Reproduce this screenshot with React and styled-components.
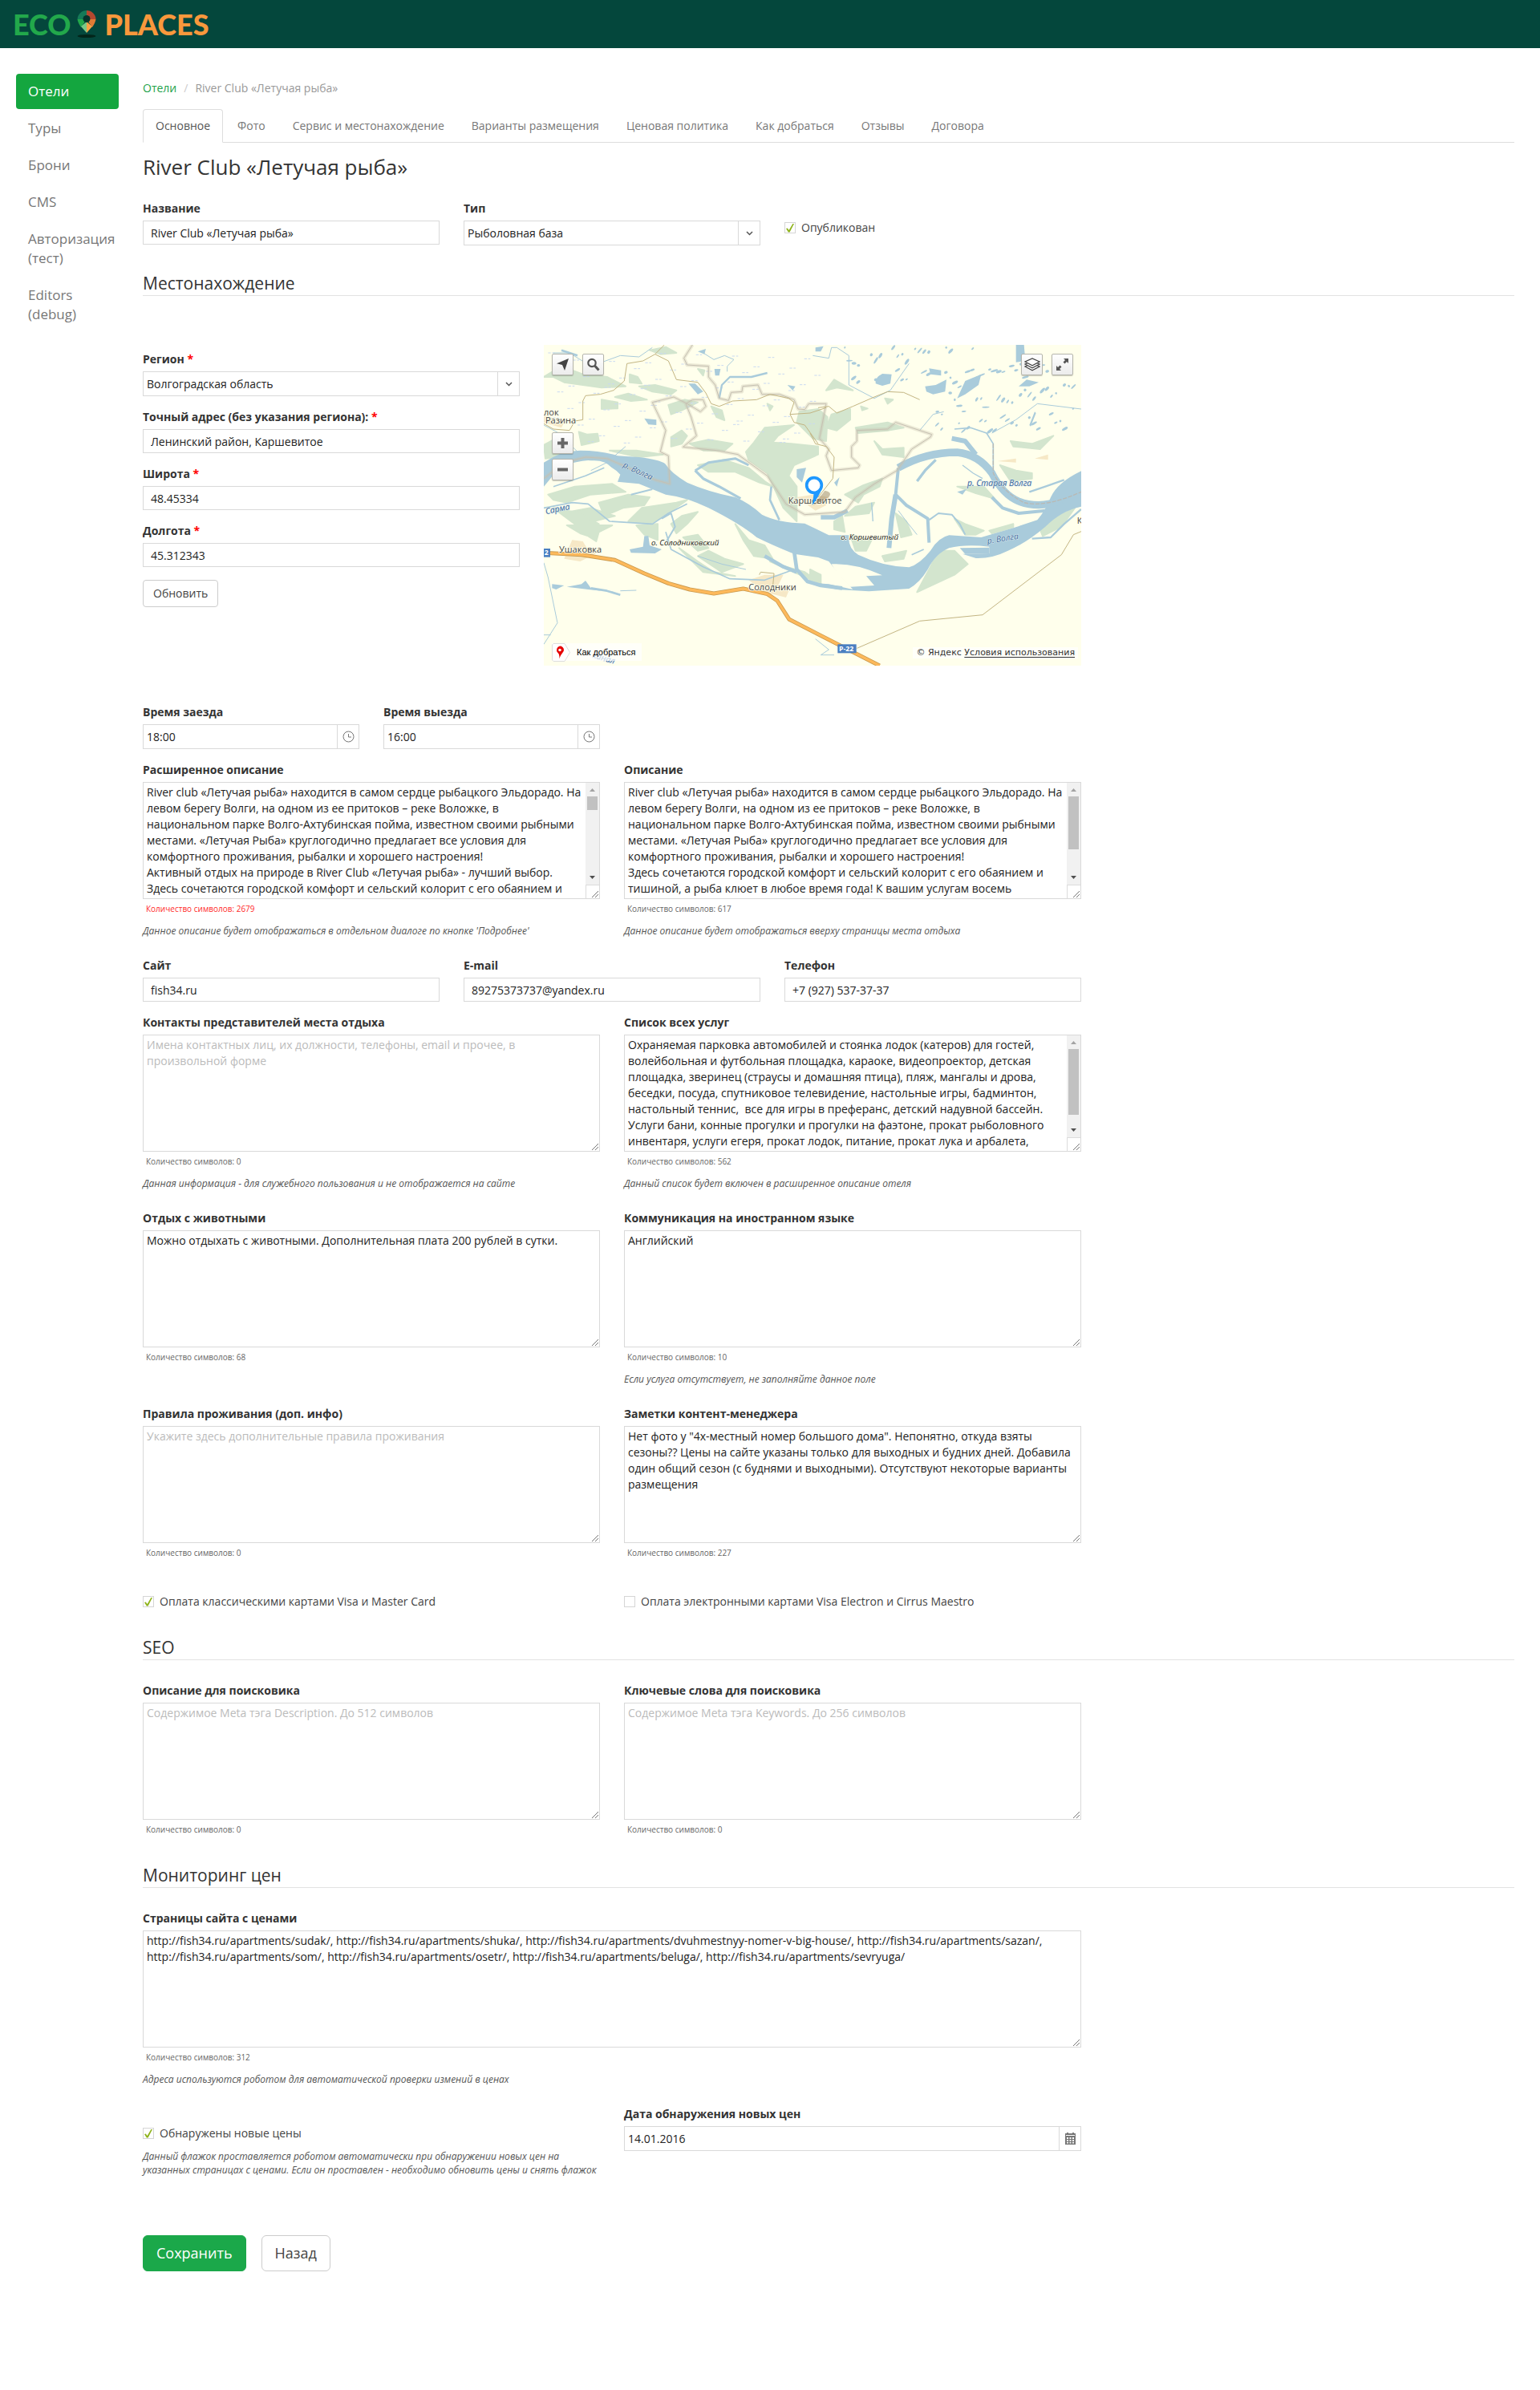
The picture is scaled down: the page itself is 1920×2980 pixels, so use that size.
import React, { useId } from "react";
import styled, { createGlobalStyle, css } from "styled-components";

const GlobalStyle = createGlobalStyle`
  *, *::before, *::after { box-sizing: border-box; }
  body {
    margin: 0;
    background: #fff;
    color: #333;
    font: 14px/20px "Open Sans", "Noto Sans", sans-serif;
  }
  input, select, textarea, button { font: inherit; color: inherit; margin: 0; }
  h1, h2, p, ul, ol { margin: 0; padding: 0; font-weight: 400; }
  ul, ol { list-style: none; }
  a { color: inherit; text-decoration: none; }
`;

/* ---------- shell ---------- */

const Header = styled.header`
  display: flex;
  align-items: center;
  height: 60px;
  padding: 0 16px;
  background: #04473c;
`;
const Logo = styled.a`
  display: flex;
  align-items: center;
  gap: 7px;
  font: 900 36px/40px Lato, sans-serif;
  color: #22a84b;
`;
const LogoAccent = styled.span`
  color: #f9983c;
  padding-left: 2px;
`;
const Layout = styled.div`
  display: flex;
  align-items: flex-start;
  gap: 30px;
  padding: 32px 32px 148px 20px;
`;
const Sidebar = styled.nav`
  flex: 0 0 128px;
  min-width: 0;
`;
const NavList = styled.ul`
  display: flex;
  flex-direction: column;
  gap: 2px;
`;
const NavLink = styled.a`
  display: block;
  padding: 10px 15px;
  border-radius: 4px;
  font-size: 17px;
  line-height: 24px;
  color: ${(p) => (p.$active ? "#fff" : "#777")};
  background: ${(p) => (p.$active ? "#14a63f" : "transparent")};
`;
const Main = styled.main`
  flex: 1;
  min-width: 0;
`;
const Breadcrumb = styled.ol`
  display: flex;
  gap: 9px;
  padding: 8px 0 16px;
  color: #999;
  a { color: #22a24a; }
`;
const Slash = styled.span`
  color: #ccc;
  padding-right: 9px;
`;
const Tabs = styled.ul`
  display: flex;
  gap: 2px;
  border-bottom: 1px solid #ddd;
`;
const Tab = styled.a`
  display: block;
  margin-bottom: -1px;
  padding: 10px 15px;
  border: 1px solid transparent;
  border-radius: 4px 4px 0 0;
  color: #777;
  ${(p) =>
    p.$active &&
    css`
      color: #555;
      background: #fff;
      border-color: #ddd;
      border-bottom-color: #fff;
    `}
`;
const Title = styled.h1`
  padding: 15px 0 27px;
  font-size: 26px;
  line-height: 30px;
`;
const SectionTitle = styled.h2`
  margin: ${(p) => p.$top}px 0 ${(p) => p.$bottom || 28}px;
  border-bottom: 1px solid #e3e3e3;
  font-size: 21px;
  line-height: 30px;
`;

/* ---------- form ---------- */

const Row = styled.div`
  display: grid;
  grid-template-columns: ${(p) => p.$cols};
  column-gap: 30px;
  align-items: start;
  max-width: 1170px;
  margin-top: ${(p) => p.$top || 0}px;
`;
const Stack = styled.div`
  display: flex;
  flex-direction: column;
  align-items: stretch;
  gap: 16px;
`;
const FieldBox = styled.div`
  display: flex;
  flex-direction: column;
  min-width: 0;
`;
const Label = styled.label`
  margin-bottom: 5px;
  font-weight: 700;
`;
const Star = styled.span`
  color: #f00;
`;
const Input = styled.input`
  width: 100%;
  height: 30px;
  padding: 0 9px;
  border: 1px solid #d9d9d9;
  background: #fff;
  color: #222;
  outline: 0;
`;
const Combo = styled.div`
  display: flex;
  height: 31px;
  border: 1px solid #d9d9d9;
  color: #222;
`;
const comboControl = css`
  flex: 1;
  min-width: 0;
  padding: 0 4px;
  border: 0;
  background: transparent;
  outline: 0;
`;
const ComboInput = styled.input`
  ${comboControl}
`;
const ComboSelect = styled.select`
  ${comboControl}
  appearance: none;
`;
const comboEnd = css`
  display: flex;
  flex: 0 0 27px;
  align-items: center;
  justify-content: center;
  padding: 0;
  border: 0;
  border-left: 1px solid #d9d9d9;
  background: #fff;
`;
const ComboButton = styled.button`
  ${comboEnd}
`;
const ComboArrow = styled.span`
  ${comboEnd}
`;
const AreaFrame = styled.div`
  position: relative;
  display: flex;
  height: 146px;
  border: 1px solid #d9d9d9;
`;
const Area = styled.textarea`
  flex: 1;
  min-width: 0;
  padding: 2px ${(p) => (p.$scrolls ? 3 : 4)}px 2px 4px;
  border: 0;
  outline: 0;
  resize: none;
  overflow: hidden;
  background: transparent;
  color: #222;
  &::placeholder { color: #bbb; opacity: 1; }
`;
const Grip = styled.svg`
  position: absolute;
  right: 1px;
  bottom: 1px;
`;
const ScrollBar = styled.div`
  display: flex;
  flex-direction: column;
  flex: 0 0 17px;
  background: #f1f1f1;
`;
const ScrollArrow = styled.svg`
  flex: 0 0 17px;
`;
const ScrollRail = styled.div`
  flex: 1;
  padding: 0 2px;
`;
const ScrollThumb = styled.div`
  height: ${(p) => p.$size}px;
  background: #c1c1c1;
`;
const ScrollCorner = styled.div`
  flex: 0 0 17px;
  border: solid #dcdcdc;
  border-width: 1px 0 0 1px;
  background: #fff;
`;
const Counter = styled.p`
  margin-top: 5px;
  padding-left: 4px;
  font-size: 10px;
  line-height: 14px;
  color: ${(p) => (p.$over ? "#ff2a2a" : "#666")};
`;
const Hint = styled.p`
  margin-top: ${(p) => p.$top || 12}px;
  font-size: 12px;
  line-height: 17px;
  font-style: italic;
  color: #555;
`;
const CheckLabel = styled.label`
  display: flex;
  align-items: center;
  gap: 7px;
  margin-top: ${(p) => p.$top || 0}px;
  color: #444;
`;
const CheckInput = styled.input`
  appearance: none;
  width: 14px;
  height: 14px;
  border: 1px solid #d5d5d5;
  background: #fff;
  display: grid;
  place-items: center;
  &:checked::before {
    content: "";
    width: 10px;
    height: 11px;
    background: #8fb31d;
    clip-path: polygon(0 60%, 18% 54%, 36% 78%, 86% 0, 100% 4%, 46% 100%, 28% 100%);
  }
`;
const Button = styled.button`
  align-self: flex-start;
  padding: ${(p) => (p.$large ? "10px 16px" : "6px 12px")};
  border: 1px solid ${(p) => (p.$primary ? "#1ba84a" : "#ccc")};
  border-radius: ${(p) => (p.$large ? 6 : 4)}px;
  background: ${(p) => (p.$primary ? "#1ba84a" : "#fff")};
  color: ${(p) => (p.$primary ? "#fff" : "#444")};
  font-size: ${(p) => (p.$large ? 18 : 14)}px;
  line-height: ${(p) => (p.$large ? 23 : 20)}px;
`;
const Actions = styled.div`
  display: flex;
  gap: 19px;
  margin-top: 73px;
`;

/* ---------- map ---------- */

const MapBox = styled.section`
  position: relative;
  height: 400px;
  overflow: hidden;
  background: #ffffec;
  margin-top: -8px;
`;
const MapDrawing = styled.svg`
  display: block;
  width: 100%;
  height: 100%;
  text { font-family: "Open Sans", "Noto Sans", sans-serif; }
`;
const MapGroup = styled.div`
  position: absolute;
  display: flex;
  flex-direction: ${(p) => (p.$column ? "column" : "row")};
  gap: ${(p) => (p.$column ? 6 : 11)}px;
  top: ${(p) => p.$top}px;
  ${(p) => p.$side}: 10px;
`;
const MapButton = styled.button`
  display: flex;
  align-items: center;
  justify-content: center;
  width: 27px;
  height: 27px;
  padding: 0;
  border: 1px solid #b5b5ac;
  border-radius: 2px;
  background: linear-gradient(#fff, #ececec);
  box-shadow: 0 1px 1px rgba(0, 0, 0, 0.2);
`;
const RouteLink = styled.a`
  position: absolute;
  left: 10px;
  bottom: 6px;
  display: flex;
  align-items: center;
  gap: 8px;
  height: 22px;
  padding-right: 8px;
  background: rgba(255, 255, 255, 0.7);
  font: 11px/22px "Liberation Sans", Arial, sans-serif;
  color: #000;
`;
const Copyright = styled.p`
  position: absolute;
  right: 4px;
  bottom: 9px;
  padding: 0 4px;
  background: rgba(255, 255, 255, 0.7);
  font: 11px/14px "DejaVu Sans", sans-serif;
  a { text-decoration: underline; text-underline-offset: 2px; }
`;

const woods = [
  "24,150 90,110 170,140 260,150 330,185 240,190 170,180 100,170 60,150",
  "240,235 300,245 300,268 240,270", "345,140 375,150 390,175 345,170",
  "380,185 440,180 520,200 500,215 430,205", "420,50 480,38 520,60 460,65",
  "290,225 340,212 410,235 350,240", "155,355 185,365 225,362 230,390 195,398 165,405",
  "490,255 550,235 600,245 540,275 500,290", "650,260 690,275 700,312 670,300",
  "500,375 540,350 560,370 540,400 500,410", "570,400 640,385 730,400 700,425 620,425",
  "24,405 70,380 130,405 70,450 30,455", "270,425 370,425 470,440 380,450",
  "600,480 700,460 790,490 850,540 880,560 830,545 740,505 640,505",
  "780,430 810,395 850,340 960,330 900,370 880,395 950,400 1050,410 1050,440 960,480 940,520 970,560 970,690 920,640 860,510 790,460",
  "980,280 1050,270 1085,300 1080,390 1030,380 970,320",
  "40,590 140,560 280,550 330,580 200,590 110,620 60,610",
  "230,620 340,590 420,600 400,630 320,640 250,670",
  "90,660 200,640 290,670 210,690 140,680",
  "60,640 160,660 230,700 140,700", "110,705 280,705 230,730 220,765 190,745 160,735",
  "390,640 520,620 560,610 490,660 420,700 340,690",
  "370,705 450,700 450,760 400,740", "500,700 540,670 600,655 560,700 520,735",
  "545,750 600,740 640,790 600,800", "640,800 700,830 770,850 690,880 600,820",
  "530,790 600,840 660,880 740,895 620,880", "740,700 790,760 850,780 880,830 810,820 770,760",
  "870,840 930,860 1000,880 1070,930 960,880", "1100,290 1170,270 1170,310 1120,350 1080,340",
  "1190,340 1310,320 1370,340 1310,350 1200,360", "1260,390 1290,420 1370,415 1370,450 1290,440",
  "1150,590 1220,555 1290,530 1280,560 1220,590 1200,620", "1260,620 1240,660 1150,670 1190,635",
  "1340,660 1380,690 1400,740 1360,750", "1170,740 1250,760 1230,800 1190,800",
  "1290,820 1380,800 1370,830 1300,840", "1110,690 1140,670 1150,730 1110,720",
  "1730,480 1790,500 1850,510 1850,530 1770,540", "1570,560 1670,560 1710,605 1640,585",
  "1560,680 1600,700 1670,725 1640,740 1600,740", "1690,725 1780,700 1780,712 1700,735",
  "1880,720 1930,680 2010,640 1960,710 1890,745",
  "1500,800 1560,800 1610,850 1560,890 1420,955 1470,860",
  "1770,390 1850,400 1930,370 1880,420 1780,410", "1020,870 1060,890 1060,930 1020,910",
  "1300,230 1330,235 1310,250", "1080,200 1110,160 1180,200 1120,190",
  "600,120 625,125 620,145", "860,250 880,260 870,275", "1210,260 1235,268 1215,275",
];
const towns = [
  "100,830 130,760 170,765 185,790 240,800 160,840", "790,910 850,890 920,890 900,930 940,950 930,975 850,955",
  "970,600 1030,590 1090,600 1080,630 1040,650", "1720,465 1790,455 1790,470", "1860,455 1910,440 1910,460",
  "24,290 100,320 90,340 24,320",
];
const creeks = [
  [9, "590,500 640,470 740,455 790,480"], [10, "590,500 620,530 680,560 760,605"],
  [12, "1350,490 1340,590 1380,630 1460,680 1465,770"], [18, "1340,590 1325,680 1315,790"],
  [6, "1465,685 1500,660 1550,665 1580,700 1600,740"], [8, "875,560 870,610 905,685"],
  [7, "680,230 690,180 720,150 800,150 860,135"], [6, "465,680 500,660 515,710 480,770"],
  [5, "24,640 130,620 190,625 270,690 430,700 490,660 560,625"],
  [10, "1490,460 1450,500 1420,540"], [14, "960,800 970,870 1010,915 1060,930 1140,940"],
  [14, "850,820 920,860 970,880"], [5, "480,730 500,795 620,860 720,905 850,910 960,870"],
  [5, "1560,345 1620,340 1680,360 1705,400 1705,510"], [18, "1550,380 1600,390 1640,440"],
  [12, "1700,600 1740,640 1800,660 1900,650"], [7, "1850,755 1920,750 1970,700 2034,645"],
  [7, "1840,580 1900,560 1970,535"], [16, "1060,675 1110,675 1160,650"],
  [3, "1030,70 1090,80 1100,40 1120,40 1165,70 1165,180 1260,230 1320,200 1390,100"],
  [3, "24,845 40,900 75,1070 24,1150"], [3, "24,1115 50,1115"], [3, "24,330 80,360 150,430"],
  [3, "60,60 120,60 200,110 310,70 380,75 430,40"], [8, "90,50 150,70"],
  [3, "1430,350 1480,290 1520,280"], [3, "1700,360 1790,310 1870,250 2034,270"],
  [3, "620,60 660,85 700,70 735,85 710,110 710,130"], [3, "1040,1130 1090,1170 1060,1190 1110,1190"],
  [8, "200,940 260,950 310,965"], [3, "310,950 370,948"], [3, "330,410 260,470 200,500"],
  [5, "60,560 180,520 250,490"], [6, "350,590 430,570"],
  [4, "1250,620 1255,690"], [3, "1350,650 1380,690 1420,740"], [4, "1590,480 1630,510 1665,530"],
  [3, "600,820 690,850 780,870"], [5, "1400,815 1445,795"],
];
const lakes = [
  "1265,160 1290,138 1325,140 1320,175 1290,183 1265,175", "1450,185 1490,180 1530,160 1525,205 1480,215 1455,205",
  "1465,118 1510,125 1510,145 1470,140", "1570,230 1600,165 1660,140 1650,180 1600,215", "1800,185 1830,160 1875,170 1840,185",
  "1790,30 1820,30 1825,90 1790,95", "565,175 590,175 620,205 600,215", "400,305 445,310 445,330 415,328",
  "345,795 395,785 400,745 415,745 420,780 465,795 440,810 350,808", "55,925 100,930 70,945 55,940",
  "110,935 165,925 180,912 200,940 240,950 190,945", "970,495 1005,490 990,545 970,525",
  "600,55 630,45 625,65", "662,120 685,120 680,145 665,145", "935,180 965,185 955,200",
  "1040,40 1070,35 1060,55 1040,55", "1580,790 1690,788 1690,810 1600,812", "1570,580 1605,570 1590,590",
  "1110,545 1130,525 1120,560", "1840,330 1860,280 1865,285 1845,335",
];
const roads = [
  "475,30 440,65 395,90 335,100 325,165 285,200 235,215 180,220 170,240 170,310 140,315 120,350 60,345 24,325",
  "440,65 490,90 520,160 600,170 630,210 650,250 680,260 730,240 820,235 870,215 940,230 960,245 945,290 960,320 1000,330 1050,400",
  "1050,265 1090,260 1120,285 1180,260 1260,225 1310,205 1370,208 1430,235",
  "945,290 1020,285 1080,265", "1020,360 1040,400 1080,410 1110,450 1105,530 1050,600",
  "1195,1165 1430,1063 1665,1040 1960,815 2005,740 2034,728", "830,890 835,880 885,885 880,940",
];
const borders = [
  "580,30 548,80 560,105 640,110 640,150 665,180 680,230 715,238 725,208 765,205 768,185 825,180 840,215 905,215 960,235 975,270 1000,272 1015,250 1080,250 1055,380 1090,420 1080,445 1100,500 1200,490 1205,480 1175,450 1175,410 1195,390 1195,350 1310,345 1340,320 1475,365 1470,375 1400,420 1345,500 1260,550 1190,600 1150,655 1000,665 930,625 860,520 750,440 670,425 545,412 595,370 575,300 555,250 580,235 620,235 630,260 610,280 560,250 510,225 430,245 480,350 460,430 490,445 495,550 440,535 340,490 260,455 180,450 100,470 24,530",
];
// Small ponds of the flood plain in the north-east corner.
const ponds = Array.from({ length: 120 }, (_, i) => ({
  x: 1150 + ((i * 197) % 870),
  y: 40 + ((i * 83 + ((i * i) % 37)) % 320),
  r: 4 + ((i * 7) % 11),
  a: -60 + ((i * 29) % 60),
})).filter((p) => p.x > 1480 || p.y < 170);
const marsh = Array.from({ length: 90 }, (_, i) => ({
  x: 40 + ((i * 173) % 1000),
  y: 60 + ((i * 67) % 340),
}));

function MapPicture() {
  return (
    <MapDrawing viewBox="24 30 2010 1200" preserveAspectRatio="xMidYMid slice" role="img" aria-label="Карта">
      <g fill="#d3e5ce" stroke="#d3e5ce" strokeWidth="6" strokeLinejoin="round">
        {woods.map((p) => <polygon key={p} points={p} />)}
      </g>
      <g fill="#f6e8c6">{towns.map((p) => <polygon key={p} points={p} />)}</g>
      <g stroke="#c9d9f2" strokeWidth="3">
        {marsh.map((m, i) => <path key={i} d={`M${m.x} ${m.y}h10m5 0h8`} />)}
      </g>
      <g fill="#a9cbdb">
        <path d="M24 470Q90 425 160 425Q240 425 300 445L380 450Q460 460 478 475Q500 510 560 545Q640 580 740 600Q790 620 840 665Q900 695 1000 698L1090 742L1165 742Q1160 790 1200 815Q1290 858 1390 862Q1430 850 1470 800Q1500 750 1540 742L1660 750L1780 715L1870 685Q1900 650 1920 600Q1945 545 2034 502V635Q1960 650 1900 710Q1830 770 1760 800Q1700 830 1640 828L1590 812L1690 810V785Q1600 775 1540 790Q1490 810 1460 870Q1430 920 1390 942L1240 952L1120 945L1020 920L1090 925L1180 945L1130 890L1090 840L1050 825L960 812Q880 780 820 750Q760 700 640 640Q560 600 480 590L380 550L300 542L310 515Q270 470 190 462Q100 470 70 505L24 560Z" />
        {lakes.map((p) => <polygon key={p} points={p} />)}
        {ponds.map((p, i) => (
          <ellipse key={i} cx={p.x} cy={p.y} rx={p.r} ry={3 + (i % 3)} transform={`rotate(${p.a} ${p.x} ${p.y})`} />
        ))}
      </g>
      <g fill="#ffffec">
        <path d="M1100 850Q1190 845 1290 892L1230 895L1260 930L1170 935Q1120 890 1100 850Z" />
        <path d="M185 465Q250 455 278 490L240 495Q200 480 185 465Z" />
        <path d="M1725 565Q1750 600 1810 620L1800 640Q1750 630 1715 590Z" />
      </g>
      <path d="M1350 490Q1450 432 1570 432Q1650 440 1700 510Q1740 590 1800 615Q1880 645 1960 610" fill="none" stroke="#a9cbdb" strokeWidth="28" />
      <g fill="none" stroke="#a9cbdb" strokeLinejoin="round">
        {creeks.map(([w, p]) => <polyline key={p} points={p} strokeWidth={w} />)}
      </g>
      <g fill="none" strokeLinejoin="round">
        {borders.map((p) => (
          <g key={p}>
            <polyline points={p} stroke="#c9c3b0" strokeOpacity="0.35" strokeWidth="13" />
            <polyline points={p} stroke="#c6c0b2" strokeWidth="3" />
          </g>
        ))}
        <path d="M1705 400V510Q1740 580 1820 620Q1900 640 2034 580" stroke="#b9b9b4" strokeWidth="4" strokeDasharray="16 5" />
        {roads.map((p) => <polyline key={p} points={p} stroke="#c3b583" strokeWidth="3" />)}
        {[[15, "#c99a4f"], [10, "#fdb95b"]].map(([w, c]) => (
          <polyline key={w} stroke={c} strokeWidth={w} points="24,808 165,815 290,835 400,885 490,922 570,945 660,960 770,942 860,962 897,987 942,1057 1280,1230" />
        ))}
      </g>
      <g fill="#4a7fc1">
        <rect x="24" y="792" width="24" height="32" />
        <rect x="1123" y="1150" width="70" height="33" />
      </g>
      <g fill="#fff" fontSize="26" fontWeight="700">
        <text x="26" y="817">2</text>
        <text x="1128" y="1176">Р-22</text>
      </g>
      <g fill="#444" fontSize="33" stroke="#ffffec" strokeWidth="5" paintOrder="stroke">
        <text x="24" y="294">лок</text>
        <text x="30" y="324">Разина</text>
        <text x="81" y="807">Ушаковка</text>
        <text x="790" y="948">Солодники</text>
        <text x="938" y="623">Каршевитое</text>
        <text x="2018" y="700">К</text>
      </g>
      <g fill="#111" fontSize="29" fontStyle="italic" stroke="#ffffec" strokeWidth="4" paintOrder="stroke">
        <text x="426" y="779">о. Солодниковский</text>
        <text x="1135" y="760">о. Коршевитый</text>
      </g>
      <g fill="#40699c" fontSize="31" fontStyle="italic" stroke="#dcebf0" strokeWidth="3" paintOrder="stroke">
        <text transform="translate(318 486) rotate(25)">р. Волга</text>
        <text transform="translate(32 664) rotate(-12)">Сарма</text>
        <text x="1608" y="557">р. Старая Волга</text>
        <text transform="translate(1684 774) rotate(-9)">р. Волга</text>
        <text transform="translate(205 1200) rotate(16)">канал</text>
      </g>
      <path d="M1032 630L1075 575Q1105 580 1090 600Z" fill="#8c7650" fillOpacity="0.45" />
      <circle cx="1035" cy="555" r="28" fill="#fff" stroke="#1e98ff" strokeWidth="11" />
      <path d="M1028 630L1034 585L1060 578Q1050 600 1028 630Z" fill="#1e98ff" />
    </MapDrawing>
  );
}

function HotelMap() {
  return (
    <MapBox>
      <MapPicture />
      <MapGroup $side="left" $top={11}>
        <MapButton type="button" aria-label="Моё местоположение">
          <svg width="17" height="17" viewBox="0 0 17 17"><path d="M16 1L1 7.200L8 9L11 16Z" fill="#444" /></svg>
        </MapButton>
        <MapButton type="button" aria-label="Поиск">
          <svg width="17" height="17" viewBox="0 0 17 17" fill="none" stroke="#555">
            <circle cx="7" cy="6.500" r="4.700" strokeWidth="2.200" /><path d="M10.500 10L15.500 15.500" strokeWidth="3" />
          </svg>
        </MapButton>
      </MapGroup>
      <MapGroup $side="left" $top={109} $column>
        <MapButton type="button" aria-label="Приблизить">
          <svg width="15" height="15" viewBox="0 0 15 15"><path d="M5.500 1h4v4.500H14v4H9.500V14h-4V9.500H1v-4h4.500z" fill="#666" /></svg>
        </MapButton>
        <MapButton type="button" aria-label="Отдалить">
          <svg width="15" height="15" viewBox="0 0 15 15"><path d="M1 5.500h13v4H1z" fill="#666" /></svg>
        </MapButton>
      </MapGroup>
      <MapGroup $side="right" $top={11}>
        <MapButton type="button" aria-label="Слои">
          <svg width="20" height="17" viewBox="0 0 20 17" fill="#fff" stroke="#444" strokeWidth="1.300">
            <path d="M1 11L10 15.800L19 11L10 7Z" /><path d="M1 8L10 12.800L19 8L10 4Z" /><path d="M1 5L10 9.800L19 5L10 1Z" />
          </svg>
        </MapButton>
        <MapButton type="button" aria-label="На весь экран">
          <svg width="15" height="15" viewBox="0 0 15 15" fill="#555">
            <path d="M15 0H9l2 2-2.500 2.500 2 2L13 4l2 2zM0 15h6l-2-2 2.500-2.500-2-2L2 11 0 9z" />
          </svg>
        </MapButton>
      </MapGroup>
      <RouteLink href="#route">
        <svg width="23" height="23" viewBox="0 0 23 23">
          <path d="M2 .5h14l6.500 11L16 22.500H2L.5 21V2z" fill="#fff" stroke="#ddd" />
          <path d="M10 3.500a5 5 0 0 1 5 5c0 3-4 4.500-5.500 11C9.500 15 9 13 7.500 12A5 5 0 0 1 10 3.500z" fill="#e60000" />
          <circle cx="10" cy="8.500" r="1.800" fill="#fff" />
        </svg>
        Как добраться
      </RouteLink>
      <Copyright>© Яндекс <a href="#terms">Условия использования</a></Copyright>
    </MapBox>
  );
}

/* ---------- field parts ---------- */

const ChevronIcon = () => (
  <svg width="9" height="6" viewBox="0 0 9 6" fill="none" stroke="#555" strokeWidth="1.500"><path d="M1 1l3.500 3.500L8 1" /></svg>
);
const ClockIcon = () => (
  <svg width="15" height="15" viewBox="0 0 15 15" fill="none" stroke="#777">
    <circle cx="7.500" cy="7.500" r="6.500" /><path d="M7.500 4v4H11" />
  </svg>
);
const CalendarIcon = () => (
  <svg width="13" height="15" viewBox="0 0 13 15">
    <path d="M0 1h2V0h2v1h5V0h2v1h2v14H0z" fill="#777" />
    <path d="M1 3h11v1H1zM2 6h2v2H2zM5.500 6h2v2h-2zM9 6h2v2H9zM2 9h2v2H2zM5.500 9h2v2h-2zM9 9h2v2H9zM2 12h2v1.500H2zM5.500 12h2v1.500h-2zM9 12h2v1.500H9z" fill="#fff" />
  </svg>
);

function Caption({ id, children, required }) {
  return <Label htmlFor={id}>{children}{required && <Star> *</Star>}</Label>;
}
function TextField({ label, value, required }) {
  const id = useId();
  return (
    <FieldBox>
      <Caption id={id} required={required}>{label}</Caption>
      <Input id={id} type="text" defaultValue={value} />
    </FieldBox>
  );
}
function SelectField({ label, value, required }) {
  const id = useId();
  return (
    <FieldBox>
      <Caption id={id} required={required}>{label}</Caption>
      <Combo>
        <ComboSelect id={id} defaultValue={value}><option>{value}</option></ComboSelect>
        <ComboArrow aria-hidden="true"><ChevronIcon /></ComboArrow>
      </Combo>
    </FieldBox>
  );
}
function PickerField({ label, value, icon, action }) {
  const id = useId();
  return (
    <FieldBox>
      <Caption id={id}>{label}</Caption>
      <Combo>
        <ComboInput id={id} type="text" defaultValue={value} />
        <ComboButton type="button" aria-label={action}>{icon}</ComboButton>
      </Combo>
    </FieldBox>
  );
}
function AreaField({ label, value, placeholder, count, over, hint, thumb }) {
  const id = useId();
  return (
    <FieldBox>
      <Caption id={id}>{label}</Caption>
      <AreaFrame>
        <Area id={id} defaultValue={value} placeholder={placeholder} $scrolls={Boolean(thumb)} />
        {thumb && (
          <ScrollBar aria-hidden="true">
            <ScrollArrow width="17" height="17"><path d="M5 11h7l-3.500-4z" fill="#a3a3a3" /></ScrollArrow>
            <ScrollRail><ScrollThumb $size={thumb} /></ScrollRail>
            <ScrollArrow width="17" height="17"><path d="M5 6h7l-3.500 4z" fill="#505050" /></ScrollArrow>
            <ScrollCorner />
          </ScrollBar>
        )}
        <Grip width="8" height="8" aria-hidden="true" stroke="#777"><path d="M0 8L8 0M4 8L8 4" /></Grip>
      </AreaFrame>
      <Counter $over={over}>Количество символов: {count}</Counter>
      {hint && <Hint>{hint}</Hint>}
    </FieldBox>
  );
}
function Check({ label, checked, top }) {
  return (
    <CheckLabel $top={top}>
      <CheckInput type="checkbox" defaultChecked={checked} />
      {label}
    </CheckLabel>
  );
}

/* ---------- content ---------- */

const nav = ["Отели", "Туры", "Брони", "CMS", "Авторизация (тест)", "Editors (debug)"];
const tabs = ["Основное", "Фото", "Сервис и местонахождение", "Варианты размещения", "Ценовая политика", "Как добраться", "Отзывы", "Договора"];

const intro =
  "River club «Летучая рыба» находится в самом сердце рыбацкого Эльдорадо. На левом берегу Волги, на одном из ее притоков – реке Воложке, в национальном парке Волго-Ахтубинская пойма, известном своими рыбными местами. «Летучая Рыба» круглогодично предлагает все условия для комфортного проживания, рыбалки и хорошего настроения!\n";
const longText = intro +
  "Активный отдых на природе в River Club «Летучая рыба» - лучший выбор. Здесь сочетаются городской комфорт и сельский колорит с его обаянием и";
const shortText = intro +
  "Здесь сочетаются городской комфорт и сельский колорит с его обаянием и тишиной, а рыба клюет в любое время года! К вашим услугам восемь";
const services =
  "Охраняемая парковка автомобилей и стоянка лодок (катеров) для гостей, волейбольная и футбольная площадка, караоке, видеопроектор, детская площадка, зверинец (страусы и домашняя птица), пляж, мангалы и дрова, беседки, посуда, спутниковое телевидение, настольные игры, бадминтон, настольный теннис,  все для игры в преферанс, детский надувной бассейн. Услуги бани, конные прогулки и прогулки на фаэтоне, прокат рыболовного инвентаря, услуги егеря, прокат лодок, питание, прокат лука и арбалета,";
const notes =
  "Нет фото у \"4х-местный номер большого дома\". Непонятно, откуда взяты сезоны?? Цены на сайте указаны только для выходных и будних дней. Добавила один общий сезон (с буднями и выходными). Отсутствуют некоторые варианты размещения";
const pages =
  "http://fish34.ru/apartments/sudak/, http://fish34.ru/apartments/shuka/, http://fish34.ru/apartments/dvuhmestnyy-nomer-v-big-house/, http://fish34.ru/apartments/sazan/, http://fish34.ru/apartments/som/, http://fish34.ru/apartments/osetr/, http://fish34.ru/apartments/beluga/, http://fish34.ru/apartments/sevryuga/";

const HALVES = "1fr 1fr";
const THIRDS = "1fr 1fr 1fr";

export default function App() {
  return (
    <>
      <GlobalStyle />
      <Header>
        <Logo href="#home">
          ECO
          <svg width="26" height="36" viewBox="0 0 26 36" aria-hidden="true">
            <ellipse cx="13" cy="33" rx="11.500" ry="2" fill="#03251a" />
            <path d="M13 1A11.500 11.500 0 0 0 1.500 12H13z" fill="#157a58" />
            <path d="M13 1A11.500 11.500 0 0 1 24.500 12H13z" fill="#b4482f" />
            <path d="M1.500 12Q2 16 6 22L13 12z" fill="#23a84b" />
            <path d="M24.500 12Q24 16 20 22L13 12z" fill="#e07b35" />
            <path d="M6 21L13 29V15z" fill="#79c987" />
            <path d="M20 21L13 29V15z" fill="#f9a045" />
            <circle cx="13" cy="11.500" r="4.500" fill="#04352c" />
          </svg>
          <LogoAccent>PLACES</LogoAccent>
        </Logo>
      </Header>
      <Layout>
        <Sidebar>
          <NavList>
            {nav.map((item, i) => (
              <li key={item}><NavLink href="#nav" $active={i === 0}>{item}</NavLink></li>
            ))}
          </NavList>
        </Sidebar>
        <Main>
          <Breadcrumb>
            <li><a href="#hotels">Отели</a></li>
            <li><Slash>/</Slash>River Club «Летучая рыба»</li>
          </Breadcrumb>
          <Tabs>
            {tabs.map((item, i) => (
              <li key={item}><Tab href="#tab" $active={i === 0}>{item}</Tab></li>
            ))}
          </Tabs>
          <form onSubmit={(e) => e.preventDefault()}>
            <Title>River Club «Летучая рыба»</Title>
            <Row $cols={THIRDS}>
              <TextField label="Название" value="River Club «Летучая рыба»" />
              <SelectField label="Тип" value="Рыболовная база" />
              <Check label="Опубликован" checked top={24} />
            </Row>

            <SectionTitle $top={32} $bottom={69}>Местонахождение</SectionTitle>
            <Row $cols="470fr 670fr">
              <Stack>
                <SelectField label="Регион" value="Волгоградская область" required />
                <TextField label="Точный адрес (без указания региона):" value="Ленинский район, Каршевитое" required />
                <TextField label="Широта" value="48.45334" required />
                <TextField label="Долгота" value="45.312343" required />
                <Button type="button">Обновить</Button>
              </Stack>
              <HotelMap />
            </Row>

            <Row $cols="270fr 270fr 570fr" $top={48}>
              <PickerField label="Время заезда" value="18:00" icon={<ClockIcon />} action="Выбрать время" />
              <PickerField label="Время выезда" value="16:00" icon={<ClockIcon />} action="Выбрать время" />
            </Row>
            <Row $cols={HALVES} $top={16}>
              <AreaField label="Расширенное описание" value={longText} count={2679} over thumb={17} hint="Данное описание будет отображаться в отдельном диалоге по кнопке 'Подробнее'" />
              <AreaField label="Описание" value={shortText} count={617} thumb={66} hint="Данное описание будет отображаться вверху страницы места отдыха" />
            </Row>
            <Row $cols={THIRDS} $top={25}>
              <TextField label="Сайт" value="fish34.ru" />
              <TextField label="E-mail" value="89275373737@yandex.ru" />
              <TextField label="Телефон" value="+7 (927) 537-37-37" />
            </Row>
            <Row $cols={HALVES} $top={16}>
              <AreaField label="Контакты представителей места отдыха" placeholder="Имена контактных лиц, их должности, телефоны, email и прочее, в произвольной форме" count={0} hint="Данная информация - для служебного пользования и не отображается на сайте" />
              <AreaField label="Список всех услуг" value={services} count={562} thumb={82} hint="Данный список будет включен в расширенное описание отеля" />
            </Row>
            <Row $cols={HALVES} $top={25}>
              <AreaField label="Отдых с животными" value="Можно отдыхать с животными. Дополнительная плата 200 рублей в сутки." count={68} />
              <AreaField label="Коммуникация на иностранном языке" value="Английский" count={10} hint="Если услуга отсутствует, не заполняйте данное поле" />
            </Row>
            <Row $cols={HALVES} $top={25}>
              <AreaField label="Правила проживания (доп. инфо)" placeholder="Укажите здесь дополнительные правила проживания" count={0} />
              <AreaField label="Заметки контент-менеджера" value={notes} count={227} />
            </Row>
            <Row $cols={HALVES} $top={44}>
              <Check label="Оплата классическими картами Visa и Master Card" checked />
              <Check label="Оплата электронными картами Visa Electron и Cirrus Maestro" />
            </Row>

            <SectionTitle $top={32}>SEO</SectionTitle>
            <Row $cols={HALVES}>
              <AreaField label="Описание для поисковика" placeholder="Содержимое Meta тэга Description. До 512 символов" count={0} />
              <AreaField label="Ключевые слова для поисковика" placeholder="Содержимое Meta тэга Keywords. До 256 символов" count={0} />
            </Row>

            <SectionTitle $top={35}>Мониторинг цен</SectionTitle>
            <Row $cols="1fr">
              <AreaField label="Страницы сайта с ценами" value={pages} count={312} hint="Адреса используются роботом для автоматической проверки измений в ценах" />
            </Row>
            <Row $cols={HALVES} $top={25}>
              <FieldBox>
                <Check label="Обнаружены новые цены" checked top={24} />
                <Hint $top={10}>Данный флажок проставляется роботом автоматически при обнаружении новых цен на указанных страницах с ценами. Если он проставлен - необходимо обновить цены и снять флажок</Hint>
              </FieldBox>
              <PickerField label="Дата обнаружения новых цен" value="14.01.2016" icon={<CalendarIcon />} action="Выбрать дату" />
            </Row>

            <Actions>
              <Button type="submit" $large $primary>Сохранить</Button>
              <Button type="button" $large>Назад</Button>
            </Actions>
          </form>
        </Main>
      </Layout>
    </>
  );
}
